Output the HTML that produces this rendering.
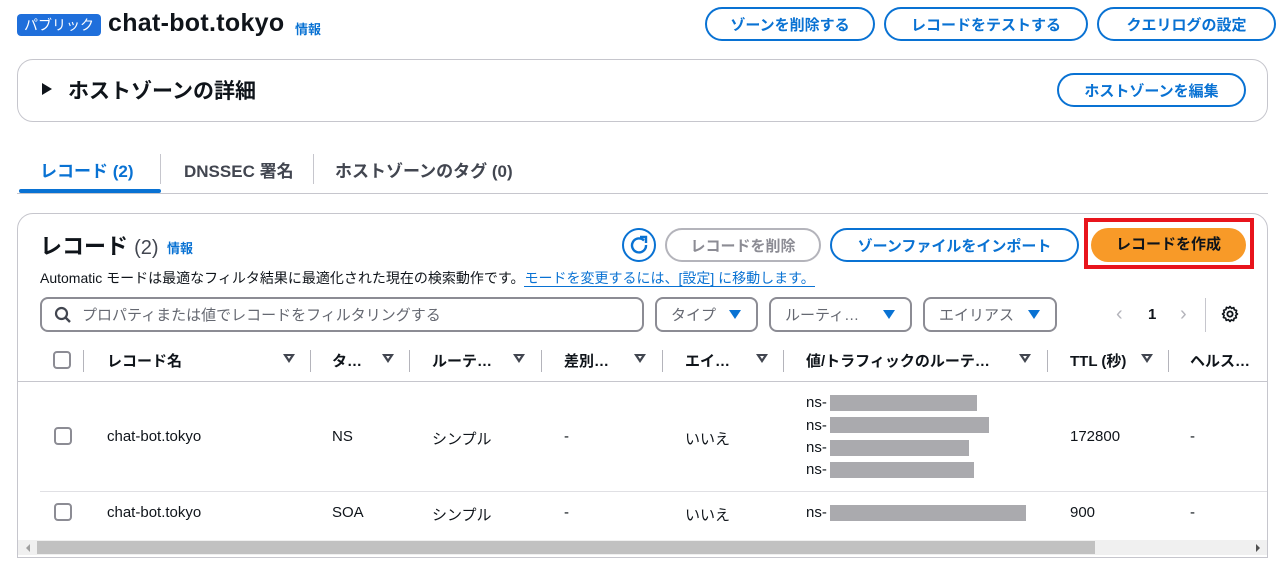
<!DOCTYPE html>
<html><head><meta charset="utf-8"><style>
*{box-sizing:border-box;margin:0;padding:0}
body{width:1284px;height:565px;overflow:hidden;background:#fff;font-family:"Liberation Sans","Noto Sans CJK JP",sans-serif;color:#0f141a;position:relative}
.a{position:absolute;white-space:nowrap}
.btn{position:absolute;border:2px solid #0972d3;border-radius:18px;color:#0972d3;font-weight:bold;font-size:15px;display:flex;align-items:center;justify-content:center;background:#fff}
.box{position:absolute;border:1px solid #c6c6cd;border-radius:16px}
.sel{position:absolute;border:2px solid #8c8c94;border-radius:8px;font-size:15px;color:#656871;display:flex;align-items:center;padding-left:14px}
.tri{position:absolute;width:0;height:0;border-left:6px solid transparent;border-right:6px solid transparent;border-top:9px solid #0972d3;top:11px}
.th{position:absolute;top:350px;font-size:15px;font-weight:bold;color:#0f141a}
.dn{position:absolute;top:354px;width:0;height:0;border-left:6px solid transparent;border-right:6px solid transparent;border-top:9px solid #424650}
.dn::after{content:"";position:absolute;left:-2px;top:-7px;border-left:2px solid transparent;border-right:2px solid transparent;border-top:3px solid #fff}
.sep{position:absolute;top:350px;width:1px;height:22px;background:#b4b4bb}
.td{position:absolute;font-size:15px;color:#0f141a}
.cb{position:absolute;width:18px;height:18px;border:2px solid #8c8c94;border-radius:4px}
.red{position:absolute;background:#aaaaae}
</style></head><body>
<div class="a" style="left:17px;top:14px;width:84px;height:22px;background:#1f6fdb;color:#fff;border-radius:4px;font-size:14px;text-align:center;line-height:22px">パブリック</div>
<div class="a" style="left:108px;top:9px;font-size:25px;font-weight:bold;letter-spacing:0.3px">chat-bot.tokyo</div>
<div class="a" style="left:295px;top:19px;font-size:13px;font-weight:bold;color:#0972d3">情報</div>
<div class="btn" style="left:705px;top:7px;width:170px;height:34px">ゾーンを削除する</div>
<div class="btn" style="left:884px;top:7px;width:204px;height:34px">レコードをテストする</div>
<div class="btn" style="left:1097px;top:7px;width:179px;height:34px">クエリログの設定</div>

<div class="box" style="left:17px;top:59px;width:1251px;height:63px"></div>
<div class="a" style="left:42px;top:83px;width:0;height:0;border-top:6px solid transparent;border-bottom:6px solid transparent;border-left:10px solid #0f141a"></div>
<div class="a" style="left:68px;top:75px;font-size:21px;font-weight:bold">ホストゾーンの詳細</div>
<div class="btn" style="left:1057px;top:73px;width:189px;height:34px">ホストゾーンを編集</div>

<div class="a" style="left:40px;top:157px;font-size:17px;font-weight:bold;color:#0972d3">レコード (2)</div>
<div class="a" style="left:19px;top:189px;width:142px;height:4px;background:#0972d3;border-radius:2px"></div>
<div class="a" style="left:160px;top:154px;width:1px;height:30px;background:#c6c6cd"></div>
<div class="a" style="left:184px;top:157px;font-size:17px;font-weight:bold;color:#424650">DNSSEC 署名</div>
<div class="a" style="left:313px;top:154px;width:1px;height:30px;background:#c6c6cd"></div>
<div class="a" style="left:335px;top:157px;font-size:17px;font-weight:bold;color:#424650">ホストゾーンのタグ (0)</div>
<div class="a" style="left:17px;top:193px;width:1251px;height:1px;background:#c6c6cd"></div>

<div class="box" style="left:17px;top:213px;width:1251px;height:345px;border-radius:16px 16px 0 0"></div>
<div class="a" style="left:40px;top:229px;font-size:22px;font-weight:bold">レコード <span style="font-weight:normal;color:#424650;font-size:20px">(2)</span></div>
<div class="a" style="left:167px;top:238px;font-size:13px;font-weight:bold;color:#0972d3">情報</div>
<div class="a" style="left:622px;top:228px;width:34px;height:34px;border:2px solid #0972d3;border-radius:50%"></div>
<svg class="a" style="left:627px;top:233px" width="24" height="24" viewBox="0 0 24 24"><path d="M17 7.5A7 7 0 1 0 19 12" fill="none" stroke="#0972d3" stroke-width="2.4"/><path d="M13 4h6v6" fill="none" stroke="#0972d3" stroke-width="2.4"/></svg>
<div class="btn" style="left:665px;top:228px;width:156px;height:34px;border-color:#b4b4bb;color:#8c8c94">レコードを削除</div>
<div class="btn" style="left:830px;top:228px;width:249px;height:34px">ゾーンファイルをインポート</div>
<div class="a" style="left:1084px;top:218px;width:170px;height:51px;border:4px solid #e8141c"></div>
<div class="a" style="left:1091px;top:228px;width:155px;height:34px;border-radius:17px;background:#f89a28;color:#0f141a;font-weight:bold;font-size:15px;text-align:center;line-height:34px">レコードを作成</div>
<div class="a" style="left:40px;top:268px;font-size:14px;color:#0f141a">Automatic モードは最適なフィルタ結果に最適化された現在の検索動作です。<span style="color:#0972d3;border-bottom:1px solid #0972d3">モードを変更するには、[設定] に移動します。</span></div>

<div class="sel" style="left:40px;top:297px;width:604px;height:35px;padding-left:40px">プロパティまたは値でレコードをフィルタリングする</div>
<svg class="a" style="left:54px;top:306px" width="18" height="18" viewBox="0 0 18 18"><circle cx="7.5" cy="7.5" r="5.5" fill="none" stroke="#424650" stroke-width="2.2"/><path d="M11.5 11.5L16 16" stroke="#424650" stroke-width="2.4"/></svg>
<div class="sel" style="left:655px;top:297px;width:103px;height:35px">タイプ<div class="tri" style="left:72px"></div></div>
<div class="sel" style="left:769px;top:297px;width:143px;height:35px">ルーティ…<div class="tri" style="left:112px"></div></div>
<div class="sel" style="left:923px;top:297px;width:134px;height:35px">エイリアス<div class="tri" style="left:103px"></div></div>
<div class="a" style="left:1116px;top:303px;font-size:20px;color:#b4b4bb">‹</div>
<div class="a" style="left:1148px;top:306px;font-size:15px;font-weight:bold">1</div>
<div class="a" style="left:1180px;top:303px;font-size:20px;color:#b4b4bb">›</div>
<div class="a" style="left:1205px;top:298px;width:1px;height:34px;background:#c6c6cd"></div>
<svg class="a" style="left:1221px;top:305px" width="18" height="18" viewBox="0 0 24 24"><circle cx="12" cy="12" r="3.5" fill="none" stroke="#0f141a" stroke-width="2.5"/><path d="M12 2l2 2.5 3-1 .8 3 3 .8-1 3L22 12l-2.5 2 1 3-3 .8-.8 3-3-1L12 22l-2-2.5-3 1-.8-3-3-.8 1-3L2 12l2.5-2-1-3 3-.8.8-3 3 1z" fill="none" stroke="#0f141a" stroke-width="2.2" stroke-linejoin="round"/></svg>

<div class="cb" style="left:53px;top:351px"></div>
<div class="sep" style="left:83px"></div>
<div class="th" style="left:107px">レコード名</div><div class="dn" style="left:283px"></div><div class="sep" style="left:310px"></div>
<div class="th" style="left:332px">タ…</div><div class="dn" style="left:382px"></div><div class="sep" style="left:409px"></div>
<div class="th" style="left:432px">ルーテ…</div><div class="dn" style="left:513px"></div><div class="sep" style="left:541px"></div>
<div class="th" style="left:564px">差別…</div><div class="dn" style="left:634px"></div><div class="sep" style="left:662px"></div>
<div class="th" style="left:685px">エイ…</div><div class="dn" style="left:756px"></div><div class="sep" style="left:783px"></div>
<div class="th" style="left:806px">値/トラフィックのルーテ…</div><div class="dn" style="left:1019px"></div><div class="sep" style="left:1047px"></div>
<div class="th" style="left:1070px">TTL (秒)</div><div class="dn" style="left:1141px"></div><div class="sep" style="left:1168px"></div>
<div class="th" style="left:1190px">ヘルス…</div>
<div class="a" style="left:18px;top:381px;width:1249px;height:1px;background:#c6c6cd"></div>

<div class="cb" style="left:54px;top:427px"></div>
<div class="td" style="left:107px;top:428px">chat-bot.tokyo</div>
<div class="td" style="left:332px;top:428px">NS</div>
<div class="td" style="left:432px;top:428px">シンプル</div>
<div class="td" style="left:564px;top:428px">-</div>
<div class="td" style="left:685px;top:428px">いいえ</div>
<div class="td" style="left:806px;top:394px">ns-</div><div class="red" style="left:830px;top:395px;width:147px;height:16px"></div>
<div class="td" style="left:806px;top:417px">ns-</div><div class="red" style="left:830px;top:417px;width:159px;height:16px"></div>
<div class="td" style="left:806px;top:439px">ns-</div><div class="red" style="left:830px;top:440px;width:139px;height:16px"></div>
<div class="td" style="left:806px;top:461px">ns-</div><div class="red" style="left:830px;top:462px;width:144px;height:16px"></div>
<div class="td" style="left:1070px;top:428px">172800</div>
<div class="td" style="left:1190px;top:428px">-</div>
<div class="a" style="left:40px;top:491px;width:1227px;height:1px;background:#e0e0e4"></div>

<div class="cb" style="left:54px;top:503px"></div>
<div class="td" style="left:107px;top:504px">chat-bot.tokyo</div>
<div class="td" style="left:332px;top:504px">SOA</div>
<div class="td" style="left:432px;top:504px">シンプル</div>
<div class="td" style="left:564px;top:504px">-</div>
<div class="td" style="left:685px;top:504px">いいえ</div>
<div class="td" style="left:806px;top:504px">ns-</div><div class="red" style="left:830px;top:505px;width:196px;height:16px"></div>
<div class="td" style="left:1070px;top:504px">900</div>
<div class="td" style="left:1190px;top:504px">-</div>

<div class="a" style="left:18px;top:540px;width:1249px;height:15px;background:#f0f0f0"></div>
<div class="a" style="left:37px;top:541px;width:1058px;height:13px;background:#c1c1c1"></div>
<div class="a" style="left:26px;top:544px;width:0;height:0;border-top:4px solid transparent;border-bottom:4px solid transparent;border-right:4px solid #a0a0a0"></div>
<div class="a" style="left:1256px;top:544px;width:0;height:0;border-top:4px solid transparent;border-bottom:4px solid transparent;border-left:4px solid #505050"></div>
</body></html>
